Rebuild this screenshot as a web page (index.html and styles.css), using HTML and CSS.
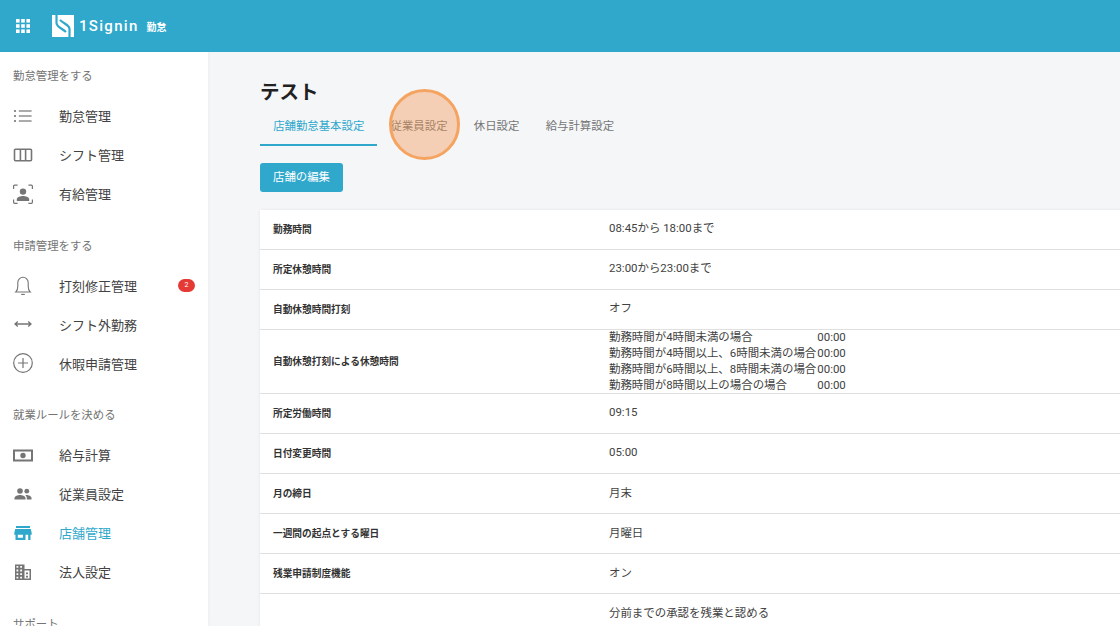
FILE: index.html
```html
<!DOCTYPE html>
<html lang="ja">
<head>
<meta charset="utf-8">
<title>1Signin 勤怠</title>
<link rel="stylesheet" href="styles.css">
</head>
<body>
<header class="topbar">
  <svg class="apps" viewBox="0 0 14 14" width="14" height="14"><g fill="#fff"><rect x="0" y="0" width="3.6" height="3.6"/><rect x="5.2" y="0" width="3.6" height="3.6"/><rect x="10.4" y="0" width="3.6" height="3.6"/><rect x="0" y="5.2" width="3.6" height="3.6"/><rect x="5.2" y="5.2" width="3.6" height="3.6"/><rect x="10.4" y="5.2" width="3.6" height="3.6"/><rect x="0" y="10.4" width="3.6" height="3.6"/><rect x="5.2" y="10.4" width="3.6" height="3.6"/><rect x="10.4" y="10.4" width="3.6" height="3.6"/></g></svg>
  <svg class="logo" viewBox="0 0 22 22" width="22" height="22"><rect width="22" height="22" fill="#fff"/><path fill="none" stroke="#30a8cc" stroke-width="2.200" d="M4.500 0V8C4.500 12 9 12.500 14 17M17.500 22V14C17.500 10 13 9.500 8 5"/></svg>
  <span class="brand">1Signin</span>
  <span class="product">勤怠</span>
</header>
<div class="layout">
  <nav class="sidebar">
    <section class="group">
      <h3 class="group-title">勤怠管理をする</h3>
      <a class="item"><svg class="ico" viewBox="0 0 20 20"><g fill="#757575"><circle cx="2" cy="5" r="1.100"/><circle cx="2" cy="10" r="1.100"/><circle cx="2" cy="15" r="1.100"/><rect x="5.800" y="4.400" width="12.800" height="1.200"/><rect x="5.800" y="9.400" width="12.800" height="1.200"/><rect x="5.800" y="14.400" width="12.800" height="1.200"/></g></svg><span>勤怠管理</span></a>
      <a class="item"><svg class="ico" viewBox="0 0 20 20"><path fill="none" stroke="#757575" stroke-width="1.600" d="M2.500 4.200h15a1 1 0 0 1 1 1v9.600a1 1 0 0 1-1 1h-15a1 1 0 0 1-1-1V5.200a1 1 0 0 1 1-1zM7.400 4.200v11.600M12.600 4.200v11.600"/></svg><span>シフト管理</span></a>
      <a class="item"><svg class="ico" viewBox="0 0 20 20"><circle cx="10" cy="7.600" r="3.200" fill="#757575"/><path fill="#757575" d="M3.800 17v-1.600C3.800 13 7.500 12 10 12s6.200 1 6.200 3.400V17z"/><path fill="none" stroke="#757575" stroke-width="1.200" d="M.6 5V2.200q0-1 1-1h3M15.400 1.200h3q1 0 1 1V5M.6 15.500v2.800q0 1 1 1h3M15.400 19.300h3q1 0 1-1v-2.800"/></svg><span>有給管理</span></a>
    </section>
    <section class="group">
      <h3 class="group-title">申請管理をする</h3>
      <a class="item"><svg class="ico" viewBox="0 0 20 20"><path fill="none" stroke="#757575" stroke-width="1.100" d="M2.800 17c1.800-1.600 2-3.200 2-5.800V7.500a5.200 5.200 0 0 1 10.400 0v3.700c0 2.600.2 4.200 2 5.800z"/><path stroke="#757575" stroke-width="1.300" d="M8.200 19.500h3.600"/></svg><span>打刻修正管理</span><b class="badge">2</b></a>
      <a class="item"><svg class="ico" viewBox="0 0 20 20"><path fill="none" stroke="#757575" stroke-width="1.300" d="M2 10h16M4.800 7.500 2 10l2.800 2.500M15.200 7.500 18 10l-2.800 2.500"/></svg><span>シフト外勤務</span></a>
      <a class="item"><svg class="ico" viewBox="0 0 20 20"><circle cx="10" cy="10" r="9.300" fill="none" stroke="#757575" stroke-width="1.200"/><path stroke="#757575" stroke-width="1.200" d="M10 5v10M5 10h10"/></svg><span>休暇申請管理</span></a>
    </section>
    <section class="group">
      <h3 class="group-title">就業ルールを決める</h3>
      <a class="item"><svg class="ico" viewBox="0 0 20 20"><path fill="#757575" fill-rule="evenodd" d="M0 4.500h20v12H0zM2 6.500v8h16v-8zM10 7.800a2.700 2.700 0 1 1 0 5.400 2.700 2.700 0 0 1 0-5.400z"/></svg><span>給与計算</span></a>
      <a class="item"><svg class="ico" viewBox="0 0 20 20"><g fill="#757575"><circle cx="7" cy="7" r="2.800"/><circle cx="13.800" cy="7.200" r="2.400"/><path d="M1.500 15.500v-1.300c0-2 3.500-3.100 5.500-3.100s5.500 1.100 5.500 3.100v1.300z"/><path d="M13.800 15.500v-1.500c0-1.200-.6-2.200-1.500-2.800 2.400-.4 6.200.8 6.200 2.800v1.500z"/></g></svg><span>従業員設定</span></a>
      <a class="item active"><svg class="ico" viewBox="0 0 20 20"><path fill="#30a8cc" fill-rule="evenodd" d="M3 3h14v2H3zM2.200 6h15.600l.9 4v1.800h-1.200V17h-15v-5.200H1.300V10zM4.800 11.800v3h5.200v-3zM12.500 11.800v5.200h2.700v-5.200z"/></svg><span>店舗管理</span></a>
      <a class="item"><svg class="ico" viewBox="0 0 20 20"><path fill="#757575" fill-rule="evenodd" d="M2 2.500h9.500v4.500H18v11H2zM3.500 4v1.800h1.800V4zM7.200 4v1.800H9V4zM3.500 7.600v1.800h1.800V7.600zM7.200 7.600v1.800H9V7.600zM3.500 11.200V13h1.800v-1.800zM7.200 11.200V13H9v-1.800zM3.500 14.800v1.700h1.800v-1.700zM7.200 14.800v1.700H9v-1.700zM11.500 8.500v8h5v-8zM13 10.500h2v1.800h-2zM13 13.800h2v1.800h-2z"/></svg><span>法人設定</span></a>
    </section>
    <section class="group">
      <h3 class="group-title">サポート</h3>
    </section>
  </nav>
  <main class="main">
    <h1 class="title">テスト</h1>
    <div class="tabs">
      <a class="tab tab-active">店舗勤怠基本設定</a>
      <a class="tab">従業員設定</a>
      <a class="tab">休日設定</a>
      <a class="tab">給与計算設定</a>
    </div>
    <button class="edit">店舗の編集</button>
    <table class="sheet">
      <tr><th>勤務時間</th><td>08:45から 18:00まで</td></tr>
      <tr><th>所定休憩時間</th><td>23:00から23:00まで</td></tr>
      <tr><th>自動休憩時間打刻</th><td>オフ</td></tr>
      <tr class="tall"><th>自動休憩打刻による休憩時間</th><td>
        <div class="breaks">
          <span>勤務時間が4時間未満の場合</span><span>00:00</span>
          <span>勤務時間が4時間以上、6時間未満の場合</span><span>00:00</span>
          <span>勤務時間が6時間以上、8時間未満の場合</span><span>00:00</span>
          <span>勤務時間が8時間以上の場合の場合</span><span>00:00</span>
        </div>
      </td></tr>
      <tr><th>所定労働時間</th><td>09:15</td></tr>
      <tr><th>日付変更時間</th><td>05:00</td></tr>
      <tr><th>月の締日</th><td>月末</td></tr>
      <tr><th>一週間の起点とする曜日</th><td>月曜日</td></tr>
      <tr><th>残業申請制度機能</th><td>オン</td></tr>
      <tr><th></th><td class="last">分前までの承認を残業と認める</td></tr>
    </table>
    <div class="highlight"></div>
  </main>
</div>
</body>
</html>
```
FILE: styles.css
```css
* { box-sizing: border-box; }
html, body { margin: 0; height: 100%; overflow: hidden; }
body {
  font-family: Roboto, "Noto Sans CJK JP", sans-serif;
  color: #333;
  background: #f4f6f8;
}
.topbar {
  height: 52px;
  background: #30a8cc;
  display: flex;
  align-items: center;
  padding-left: 16px;
  color: #fff;
}
.logo { margin-left: 22px; }
.brand {
  margin-left: 5px;
  font-size: 15px;
  font-weight: 500;
  letter-spacing: 1.300px;
  font-family: Roboto, sans-serif;
}
.product { margin-left: 8px; font-size: 10px; font-weight: 700; }
.layout { display: flex; height: 574px; }
.sidebar {
  width: 208px;
  flex: none;
  background: #fff;
  padding-top: 14px;
  overflow: hidden;
  box-shadow: 1px 0 3px rgba(0, 0, 0, 0.04);
}
.group { margin-bottom: 22.500px; }
.group-title {
  margin: 0 0 10px 13px;
  height: 20px;
  line-height: 21px;
  font-size: 11.400px;
  font-weight: 400;
  color: #757575;
}
.item {
  height: 39px;
  display: flex;
  align-items: center;
  padding-left: 13px;
  font-size: 13px;
  color: #424242;
}
.ico { width: 20px; height: 20px; flex: none; margin-right: 26px; }
.item.active { color: #30a8cc; }
.badge {
  margin-left: auto;
  margin-right: 13px;
  width: 17px;
  height: 13px;
  border-radius: 7px;
  background: #e53935;
  color: #fff;
  font-size: 7px;
  font-weight: 400;
  line-height: 13px;
  text-align: center;
}
.main { position: relative; flex: 1; min-width: 0; padding: 25px 0 0 52px; }
.title {
  margin: 0;
  height: 30px;
  line-height: 31px;
  font-size: 19.500px;
  font-weight: 700;
  color: #212121;
}
.tabs { display: flex; height: 39px; }
.tab {
  display: flex;
  align-items: center;
  padding: 0 13.150px 2px;
  height: 39px;
  font-size: 11.400px;
  color: #757575;
  border-bottom: 2px solid transparent;
}
.tab-active { color: #30a8cc; border-bottom-color: #30a8cc; }
.edit {
  display: block;
  margin-top: 17px;
  width: 83px;
  height: 29px;
  padding: 0 0 4px;
  border: 0;
  border-radius: 3px;
  background: #30a8cc;
  color: #fff;
  font: 11.400px Roboto, "Noto Sans CJK JP", sans-serif;
}
.sheet {
  margin-top: 18px;
  width: 900px;
  border-collapse: collapse;
  background: #fff;
  table-layout: fixed;
  box-shadow: 0 0 3px rgba(0, 0, 0, 0.08);
}
.sheet tr { height: 40px; border-bottom: 1px solid #e0e0e0; }
.sheet tr:first-child { height: 39.500px; }
.sheet tr.tall { height: 64px; }
.sheet th {
  width: 349px;
  padding: 0 0 2px 13px;
  text-align: left;
  font-size: 9.700px;
  font-weight: 700;
  color: #333;
}
.sheet td {
  padding: 0 0 4.500px;
  font-size: 11.450px;
  color: #424242;
}
.sheet .tall ~ tr td { padding-bottom: 2.500px; }
.sheet .tall ~ tr td.last { vertical-align: top; padding-top: 10px; }
.sheet tr.tall td { padding: 0; vertical-align: top; }
.breaks {
  display: grid;
  grid-template-columns: max-content max-content;
  grid-auto-rows: 16px;
  column-gap: 1px;
  line-height: 16px;
  height: 60px;
  margin-top: -1px;
}
.highlight {
  position: absolute;
  left: 181px;
  top: 37px;
  width: 71px;
  height: 71px;
  border-radius: 50%;
  border: 3px solid #f4a460;
  background: rgba(244, 150, 80, 0.4);
}
```
